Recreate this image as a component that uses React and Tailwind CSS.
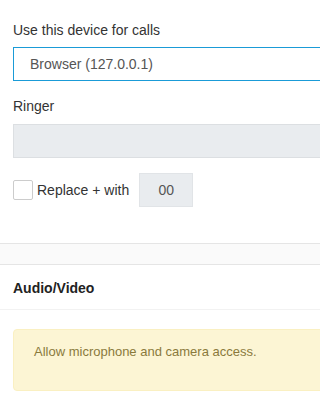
export default function App() {
  return (
    <div className="w-[320px] h-[403px] overflow-hidden bg-white text-[14px] leading-[18px] text-[#333]" style={{ fontFamily: "'Liberation Sans', Arial, sans-serif" }}>
      <div className="w-[420px]">
        {/* Device settings */}
        <div className="pl-[13px] pt-[21px]">
          <label className="block">Use this device for calls</label>
          <div className="mt-[8px] h-[34px] border border-[#1a9bd7] flex items-center pl-[16px] text-[#555]">
            Browser (127.0.0.1)
          </div>

          <label className="block mt-[16px]">Ringer</label>
          <div className="mt-[9px] h-[34px] border border-[#dcdfe2] bg-[#e9ecef]" />

          <div className="mt-[15px] flex items-center h-[34px]">
            <span className="w-[20px] h-[20px] border border-[#ccc] rounded-[2px] bg-white" />
            <span className="ml-[4px]">Replace + with</span>
            <div className="ml-[10px] w-[54px] h-[34px] bg-[#e9ecef] border border-[#e1e4e7] flex items-center justify-center text-[#555]">00</div>
          </div>
        </div>

        {/* Separator band */}
        <div className="mt-[36px] h-[22px] border-y border-[#e5e5e5] bg-[#fafafa]" />

        {/* Audio/Video */}
        <div className="h-[45px] border-b border-[#f2f2f2] pl-[13px] pt-[14px] font-bold text-[#222]">Audio/Video</div>

        <div className="pl-[13px] pt-[19px]">
          <div className="h-[62px] border border-[#faf0c2] bg-[#fcf5d4] rounded-[4px] pl-[20px] pt-[13px] text-[13px] text-[#8a7a3c]">
            Allow microphone and camera access.
          </div>
        </div>
      </div>
    </div>
  );
}
